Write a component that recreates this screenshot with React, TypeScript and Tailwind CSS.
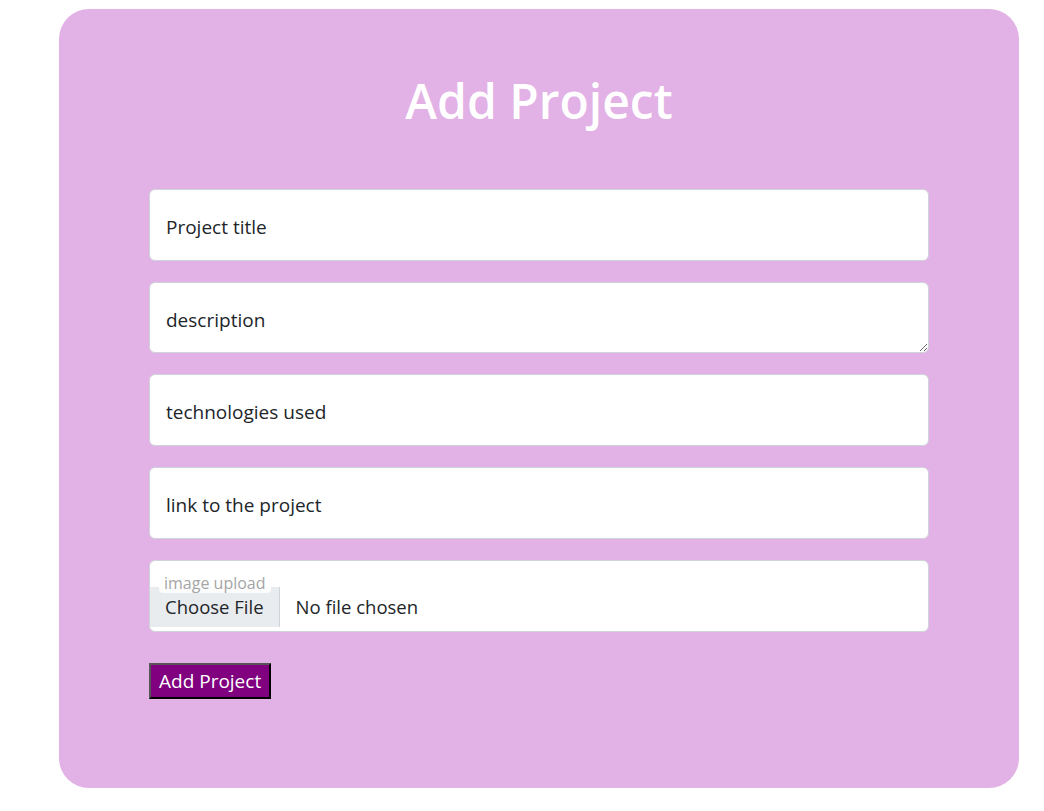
import { useState } from "react";

const fieldClass =
  "w-full h-[72px] rounded-[6px] border border-[#ced4da] bg-white px-4 pt-[3px] text-[19px] text-[#212529] placeholder:text-[#212529] outline-none";

export default function App() {
  const [title, setTitle] = useState("");
  const [description, setDescription] = useState("");
  const [tech, setTech] = useState("");
  const [link, setLink] = useState("");

  return (
    <div
      className="min-h-[811px] bg-white pt-[9px] pl-[59px]"
      style={{ fontFamily: '"Open Sans", "Noto Sans", sans-serif' }}
    >
      <section className="w-[960px] h-[779px] rounded-[30px] bg-[#e2b1e5] px-[90px]">
        <h1 className="pt-[63px] text-center text-[48px] leading-[58px] font-semibold text-white">
          Add Project
        </h1>
        <form
          onSubmit={(e) => e.preventDefault()}
          className="mt-[59px] flex flex-col gap-[21px]"
        >
          <input
            type="text"
            placeholder="Project title"
            value={title}
            onChange={(e) => setTitle(e.target.value)}
            className={fieldClass}
          />
          <textarea
            placeholder="description"
            value={description}
            onChange={(e) => setDescription(e.target.value)}
            className="block w-full h-[71px] rounded-[6px] border border-[#ced4da] bg-white px-4 pt-[22px] text-[19px] leading-[30px] text-[#212529] placeholder:text-[#212529] outline-none"
          />
          <input
            type="text"
            placeholder="technologies used"
            value={tech}
            onChange={(e) => setTech(e.target.value)}
            className={fieldClass}
          />
          <input
            type="text"
            placeholder="link to the project"
            value={link}
            onChange={(e) => setLink(e.target.value)}
            className={fieldClass}
          />
          <label className="relative block">
            <span className="absolute left-[10px] top-[14px] z-10 rounded-[4px] bg-white/85 px-[5px] text-[16px] leading-[19px] text-[#a5a5a5]">
              image upload
            </span>
            <input
              type="file"
              className="block w-full h-[72px] rounded-[6px] border border-[#ced4da] bg-white pt-[26px] pb-[4px] text-[18.5px] text-[#212529] file:mr-4 file:h-[40px] file:border-0 file:border-r file:border-[#ced4da] file:bg-[#e9ecef] file:px-[15px] file:text-[18.5px] file:text-[#212529]"
            />
          </label>
          <div className="mt-[10px]">
            <button
              type="submit"
              className="h-[36px] border-2 border-t-[#555] border-l-[#555] border-r-black border-b-black bg-[#800080] px-[8px] text-[19px] leading-[30px] text-white"
            >
              Add Project
            </button>
          </div>
        </form>
      </section>
    </div>
  );
}
